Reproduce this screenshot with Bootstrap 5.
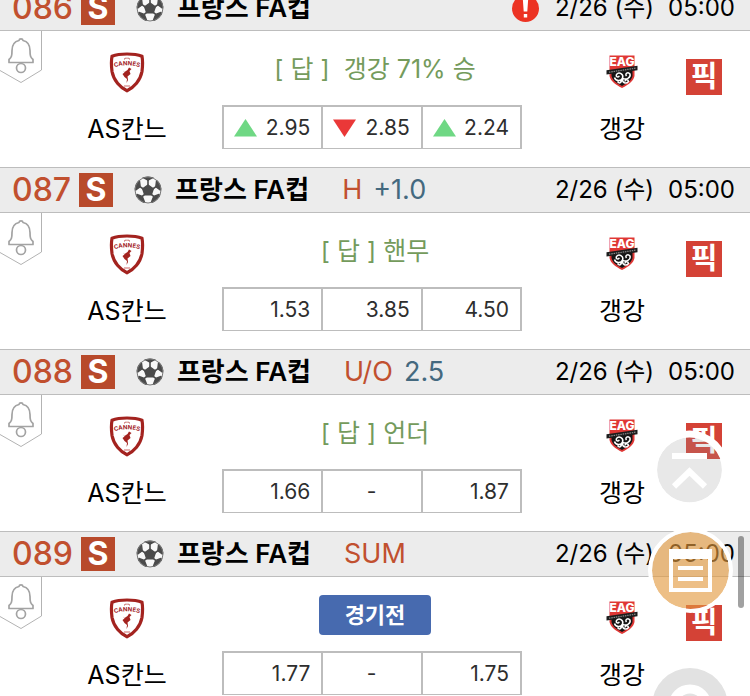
<!DOCTYPE html>
<html lang="ko">
<head>
<meta charset="utf-8">
<meta name="viewport" content="width=device-width, initial-scale=1">
<title>프랑스 FA컵</title>
<link href="https://cdn.jsdelivr.net/npm/bootstrap@5.3.0/dist/css/bootstrap.min.css" rel="stylesheet">
<style>
body{font-family:Inter,"Noto Sans CJK KR",sans-serif;color:#000;background:#fff}
.viewport{height:100vh}
.match-list{margin-top:-15px}
.match-head{height:46px;background:#ececec;border-top:1px solid #bdbdbd;border-bottom:1px solid #bdbdbd;padding:0 15px 0 12px;line-height:44px;white-space:nowrap}
.num{font-size:32px;font-weight:500;color:#c1502f}
.sport{width:34px;height:34px;margin-left:8px;background:#b84a2b;color:#fff;font-size:32px;font-weight:700;line-height:34px;text-align:center}
.ball{width:28px;height:28px;margin-left:21px}
.league{font-size:26px;font-weight:600;margin-left:13px}
.kind{font-size:27px;color:#c1502f;margin-left:33px}
.line-value{font-size:27px;color:#44697f;margin-left:11px}
.when{font-size:24px;gap:14px}
.alert-dot{width:27px;height:27px;margin-right:2px}
.match-body{display:grid;grid-template-columns:42px minmax(0,180fr) minmax(0,300fr) minmax(0,164fr) 64px;height:136px}
.bell{width:42px;height:52px}
.team{padding-top:21px}
.home{padding-right:10px}
.away{padding-left:36px}
.crest{width:42px;height:42px}
.team-name{font-size:25px;line-height:36px;margin-top:17px;white-space:nowrap}
.middle{padding-top:18px}
.status{height:40px;margin-bottom:16px;padding-left:6px;font-size:25px;line-height:40px;color:#749b5c;white-space:pre}
.btn-before{width:112px;height:40px;background:#476aaf;color:#fff;font-size:22px;font-weight:700;line-height:40px;border-radius:4px}
.btn-before:hover{background:#3d5e9f;color:#fff}
.odds{table-layout:fixed;height:44px;border-collapse:collapse;font-size:21px;line-height:24px;color:#2e2e2e}
.odds td{border:2px solid #bdbdbd;border-bottom-width:1px;padding:0 11px 0 10px}
.tri{width:23px;height:18px}
.pick{width:36px;height:36px;margin-top:28px;background:#d44236;color:#fff;font-size:29px;font-weight:700;line-height:34px}
.floating{position:fixed;background:none;border:0;padding:0;line-height:0}
.to-top{right:20px;bottom:186px;width:80px;height:80px}
.memo{right:16px;bottom:82px;width:86px;height:86px}
.search{right:22px;bottom:-48px;width:76px;height:76px}
.thumb{position:fixed;right:6px;bottom:88px;width:6px;height:72px;border-radius:3px;background:rgba(0,0,0,.37)}
</style>
<script src="https://cdn.jsdelivr.net/npm/bootstrap@5.3.0/dist/js/bootstrap.bundle.min.js"></script>
</head>
<body>
<svg width="0" height="0" class="position-absolute" aria-hidden="true">
  <symbol id="ball" viewBox="0 0 28 28">
    <clipPath id="ballclip"><circle cx="14" cy="14" r="13.4"/></clipPath>
    <g clip-path="url(#ballclip)">
      <circle cx="14" cy="14" r="13.4" fill="#f8f8f8"/>
      <g fill="#4b4b4b" stroke="#4b4b4b" stroke-width="1.400" stroke-linejoin="round">
        <path d="M14 9 19.300 12.800 17.300 18.800H10.700L8.700 12.800Z"/>
        <path d="M8 1 14 4.200 20 1V-1H8ZM22.500 5 21.800 10.600 26.200 14 29 11V4ZM25 18.500 19.700 20.400 17.600 25.800 20 29 28 25ZM3 18.500 8.300 20.400 10.400 25.800 8 29 0 25ZM5.500 5 6.200 10.600 1.800 14-1 11V4Z"/>
        <path fill="none" stroke-width="1.600" d="M14 9.600V3.800M18.700 13 22 10.600M17 18.200 19.700 20.400M11 18.200 8.300 20.400M9.300 13 6 10.600"/>
      </g>
    </g>
    <circle cx="14" cy="14" r="13" fill="none" stroke="#777" stroke-width="1"/>
  </symbol>
  <symbol id="bell" viewBox="0 0 42 52">
    <path d="M0 39.500 21 51.500 41.500 39V0" fill="none" stroke="#b3b3b3"/>
    <g fill="none" stroke="#a3a3a3" stroke-width="1.700" stroke-linejoin="round">
      <path d="M9 31V28.500C11.500 26.500 12 25 12 19.500C12 13.500 14.500 10.500 19 9.500C19.200 7.300 22.800 7.300 23 9.500C27.500 10.500 30 13.500 30 19.500C30 25 30.500 26.500 33 28.500V31.500H9Z"/>
      <circle cx="21" cy="37" r="4.500"/>
    </g>
  </symbol>
  <symbol id="cannes" viewBox="0 0 42 42">
    <path d="M21 2C26 2 31.500 2.500 36 4.300C36.700 8 36.700 14 36 19.500C34.300 28.500 28 35.700 21 38.700C14 35.700 7.700 28.500 6 19.500C5.300 14 5.300 8 6 4.300C10.500 2.500 16 2 21 2Z" fill="#fff" stroke="#a3231f" stroke-width="3.200"/>
    <path id="arc" d="M8 15.500Q21 11 34 15.500" fill="none"/>
    <text font-size="6" font-weight="700" fill="#a3231f"><textPath href="#arc" startOffset="50%" text-anchor="middle">CANNES</textPath></text>
    <path d="M18.500 7.500 19 6M20 7V5.500M22 7V5.500M23.500 7.500 23 6" stroke="#b33a36" stroke-width=".8"/>
    <path d="M23 15.500 25.500 17 23.500 19 24.500 22 21.500 24.500 22 28 20.500 31 21 27 18.500 25 16.500 22 18.500 20.500 17 18.500 18.500 20 21.500 18Z" fill="#a3231f"/>
    <path d="M18 34H24" stroke="#c66" stroke-width="1"/>
  </symbol>
  <symbol id="eag" viewBox="0 0 42 42">
    <path d="M8.500 3.500H33.500V24C32.500 29 28 32.500 21 36C14 32.500 9.500 29 8.500 24Z" fill="#df3735"/>
    <path d="M10.500 19 31.500 18V24C30.500 28 27 31 21 34C15 31 11.500 28 10.500 24Z" fill="#151515"/>
    <text x="21" y="14.200" font-size="12" font-weight="800" fill="#fff" text-anchor="middle">EAG</text>
    <path d="M5.500 18.200 36.500 13.700V18.200L5.500 22.500Z" fill="#1c1c1c"/>
    <path d="M8 20.200 34.500 16.200" stroke="#888" stroke-width="1.200" stroke-dasharray="1.500 .8"/>
    <g fill="none" stroke="#fff" stroke-width="1.500"><path d="M21.500 26C23 22 18 19.500 15.500 22.500C14.500 25 17.500 26 18.200 23.800M21.500 26C20 30 14.500 29 13.500 25.500M21.500 26C25 28.500 30 26 29 22C27 19.500 23.500 21.500 25.500 24M21.500 26C21 31 25 32.500 27.500 29.500C27 27 24 27.500 24 29.500M21 27C20 32 18 31.500 16.500 29.500"/></g>
  </symbol>
  <symbol id="up" viewBox="0 0 23 18"><path d="M11.500 0 23 17.500H0Z" fill="#6fd884"/></symbol>
  <symbol id="down" viewBox="0 0 23 18"><path d="M0 .5H23L11.500 18Z" fill="#ea3838"/></symbol>
</svg>

<main class="viewport overflow-hidden">
<div class="match-list">

  <section>
    <header class="match-head d-flex align-items-center">
      <span class="num">086</span><span class="sport">S</span>
      <svg class="ball flex-shrink-0"><use href="#ball"/></svg>
      <span class="league">프랑스 FA컵</span>
      <div class="when d-flex align-items-center ms-auto">
        <svg class="alert-dot" viewBox="0 0 27 27" role="img" aria-label="알림"><circle cx="13.500" cy="13.500" r="13.500" fill="#ec3323"/><path d="M10.800 4H16.200L15.300 16.500H11.700ZM11.800 19H15.200V22.400H11.800Z" fill="#fff"/></svg>
        <span>2/26 (수)</span><span>05:00</span>
      </div>
    </header>
    <div class="match-body">
      <svg class="bell"><use href="#bell"/></svg>
      <div class="team home d-flex flex-column align-items-center"><svg class="crest"><use href="#cannes"/></svg><div class="team-name">AS칸느</div></div>
      <div class="middle">
        <div class="status text-center">[ 답 ]&nbsp; 갱강 71% 승</div>
        <table class="odds w-100"><tbody><tr>
          <td><div class="d-flex justify-content-between align-items-center"><svg class="tri"><use href="#up"/></svg>2.95</div></td>
          <td><div class="d-flex justify-content-between align-items-center"><svg class="tri"><use href="#down"/></svg>2.85</div></td>
          <td><div class="d-flex justify-content-between align-items-center"><svg class="tri"><use href="#up"/></svg>2.24</div></td>
        </tr></tbody></table>
      </div>
      <div class="team away d-flex flex-column align-items-center"><svg class="crest"><use href="#eag"/></svg><div class="team-name">갱강</div></div>
      <button type="button" class="pick border-0 p-0">픽</button>
    </div>
  </section>

  <section>
    <header class="match-head d-flex align-items-center">
      <span class="num">087</span><span class="sport">S</span>
      <svg class="ball flex-shrink-0"><use href="#ball"/></svg>
      <span class="league">프랑스 FA컵</span><span class="kind">H</span><span class="line-value">+1.0</span>
      <div class="when d-flex align-items-center ms-auto"><span>2/26 (수)</span><span>05:00</span></div>
    </header>
    <div class="match-body">
      <svg class="bell"><use href="#bell"/></svg>
      <div class="team home d-flex flex-column align-items-center"><svg class="crest"><use href="#cannes"/></svg><div class="team-name">AS칸느</div></div>
      <div class="middle">
        <div class="status text-center">[ 답 ] 핸무</div>
        <table class="odds w-100"><tbody><tr><td class="text-end">1.53</td><td class="text-end">3.85</td><td class="text-end">4.50</td></tr></tbody></table>
      </div>
      <div class="team away d-flex flex-column align-items-center"><svg class="crest"><use href="#eag"/></svg><div class="team-name">갱강</div></div>
      <button type="button" class="pick border-0 p-0">픽</button>
    </div>
  </section>

  <section>
    <header class="match-head d-flex align-items-center">
      <span class="num">088</span><span class="sport">S</span>
      <svg class="ball flex-shrink-0"><use href="#ball"/></svg>
      <span class="league">프랑스 FA컵</span><span class="kind">U/O</span><span class="line-value">2.5</span>
      <div class="when d-flex align-items-center ms-auto"><span>2/26 (수)</span><span>05:00</span></div>
    </header>
    <div class="match-body">
      <svg class="bell"><use href="#bell"/></svg>
      <div class="team home d-flex flex-column align-items-center"><svg class="crest"><use href="#cannes"/></svg><div class="team-name">AS칸느</div></div>
      <div class="middle">
        <div class="status text-center">[ 답 ] 언더</div>
        <table class="odds w-100"><tbody><tr><td class="text-end">1.66</td><td class="text-center">-</td><td class="text-end">1.87</td></tr></tbody></table>
      </div>
      <div class="team away d-flex flex-column align-items-center"><svg class="crest"><use href="#eag"/></svg><div class="team-name">갱강</div></div>
      <button type="button" class="pick border-0 p-0">픽</button>
    </div>
  </section>

  <section>
    <header class="match-head d-flex align-items-center">
      <span class="num">089</span><span class="sport">S</span>
      <svg class="ball flex-shrink-0"><use href="#ball"/></svg>
      <span class="league">프랑스 FA컵</span><span class="kind">SUM</span>
      <div class="when d-flex align-items-center ms-auto"><span>2/26 (수)</span><span>05:00</span></div>
    </header>
    <div class="match-body">
      <svg class="bell"><use href="#bell"/></svg>
      <div class="team home d-flex flex-column align-items-center"><svg class="crest"><use href="#cannes"/></svg><div class="team-name">AS칸느</div></div>
      <div class="middle">
        <div class="status d-flex justify-content-center"><button type="button" class="btn btn-before border-0 p-0">경기전</button></div>
        <table class="odds w-100"><tbody><tr><td class="text-end">1.77</td><td class="text-center">-</td><td class="text-end">1.75</td></tr></tbody></table>
      </div>
      <div class="team away d-flex flex-column align-items-center"><svg class="crest"><use href="#eag"/></svg><div class="team-name">갱강</div></div>
      <button type="button" class="pick border-0 p-0">픽</button>
    </div>
  </section>
</div>
</main>

<button type="button" class="floating to-top" aria-label="맨 위로">
  <svg viewBox="0 0 80 80" width="80" height="80"><circle cx="39.500" cy="40" r="32.500" fill="rgba(149,149,149,.22)"/><circle cx="39.500" cy="40" r="36" fill="none" stroke="#fff" stroke-width="7"/><path d="M22 23H57V29H22Z" fill="#fff"/><path d="M24 56.500 39.500 41.500 55 56.500" fill="none" stroke="#fff" stroke-width="6"/></svg>
</button>
<button type="button" class="floating memo" aria-label="구매내역">
  <svg viewBox="0 0 86 86" width="86" height="86"><circle cx="42.500" cy="42.500" r="38.500" fill="rgba(227,154,63,.63)"/><circle cx="42.500" cy="42.500" r="40.500" fill="none" stroke="#fff" stroke-width="4"/><path fill="#fff" fill-rule="evenodd" d="M21 21H64V64H21ZM25 31V60H60V31ZM30 38H55V42H30ZM30 49H55V53H30Z"/></svg>
</button>
<button type="button" class="floating search" aria-label="검색">
  <svg viewBox="0 0 76 76" width="76" height="76"><circle cx="38" cy="38" r="38" fill="#e2e2e2"/><circle cx="38" cy="38" r="17" fill="none" stroke="#fff" stroke-width="9"/></svg>
</button>
<div class="thumb"></div>
</body>
</html>
